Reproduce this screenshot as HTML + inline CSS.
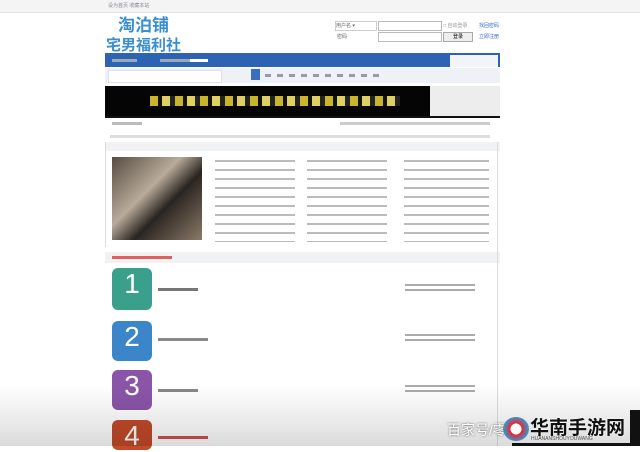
<!DOCTYPE html>
<html><head><meta charset="utf-8"><style>
body{margin:0;width:640px;height:446px;overflow:hidden;background:#fff;font-family:"Liberation Sans","Noto Sans CJK SC",sans-serif;position:relative}
.a{position:absolute}
.s{background:repeating-linear-gradient(180deg,#aaa 0 2px,#fff 2px 9px);opacity:.8}
</style></head><body>
<div class="a" style="left:0;top:0;width:640px;height:12px;background:#f4f4f4;border-bottom:1px solid #e6e6e6"></div>
<div class="a" style="left:108px;top:2px;font-size:5px;color:#889">设为首页 收藏本站</div>
<div class="a" style="left:118px;top:11px;font-size:17px;color:#3a8ed2;font-weight:bold">淘泊铺</div>
<div class="a" style="left:106px;top:34px;font-size:15px;color:#3a8ed2;font-weight:bold">宅男福利社</div>
<div class="a" style="left:335px;top:21px;width:40px;height:8px;border:1px solid #ccc;font-size:5px;color:#666">用户名 ▾</div>
<div class="a" style="left:378px;top:21px;width:62px;height:8px;border:1px solid #bbb"></div>
<div class="a" style="left:378px;top:32px;width:62px;height:8px;border:1px solid #bbb"></div>
<div class="a" style="left:337px;top:33px;font-size:5px;color:#666">密码</div>
<div class="a" style="left:443px;top:32px;width:28px;height:8px;border:1px solid #aaa;background:#eee;font-size:5px;text-align:center">登录</div>
<div class="a" style="left:443px;top:22px;font-size:5px;color:#999">□ 自动登录</div>
<div class="a" style="left:479px;top:22px;font-size:5px;color:#36c">找回密码</div>
<div class="a" style="left:479px;top:33px;font-size:5px;color:#36c">立即注册</div>
<div class="a" style="left:105px;top:53px;width:395px;height:14px;background:#2e63b3"></div>
<div class="a" style="left:450px;top:55px;width:48px;height:12px;background:#f2f4f7"></div>
<div class="a" style="left:112px;top:59px;width:25px;height:3px;background:#9ab"></div>
<div class="a" style="left:160px;top:59px;width:30px;height:3px;background:#9ab"></div>
<div class="a" style="left:190px;top:59px;width:18px;height:3px;background:#fff"></div>
<div class="a" style="left:105px;top:68px;width:395px;height:15px;background:#eef1f5"></div>
<div class="a" style="left:108px;top:70px;width:112px;height:11px;background:#fff;border:1px solid #dde"></div>
<div class="a" style="left:251px;top:69px;width:9px;height:11px;background:#3a6fc0"></div>
<div class="a" style="left:265px;top:74px;width:120px;height:3px;background:repeating-linear-gradient(90deg,#99a 0 6px,transparent 6px 12px)"></div>
<div class="a" style="left:105px;top:86px;width:325px;height:30px;background:#050505"></div>
<div class="a" style="left:150px;top:96px;width:250px;height:10px;background:repeating-linear-gradient(90deg,#c9b42a 0 8px,#111 8px 12px,#e0d060 12px 20px,#222 20px 25px)"></div>
<div class="a" style="left:430px;top:86px;width:70px;height:30px;background:#ededed"></div>
<div class="a" style="left:105px;top:116px;width:395px;height:2px;background:#111"></div>
<div class="a" style="left:112px;top:122px;width:30px;background:#bbb;height:3px"></div>
<div class="a" style="left:340px;top:122px;width:150px;background:#ccc;height:3px"></div>
<div class="a" style="left:110px;top:135px;width:380px;background:#ddd;height:3px"></div>
<div class="a" style="left:105px;top:142px;width:395px;height:9px;background:#f0f2f4"></div>
<div class="a" style="left:105px;top:142px;width:1px;height:105px;background:#ddd"></div>
<div class="a" style="left:112px;top:157px;width:90px;height:83px;background:linear-gradient(135deg,#554b40,#b8ab9a 40%,#2a2420 60%,#8a7a68)"></div>
<div class="a s" style="left:215px;top:160px;width:80px;height:82px"></div>
<div class="a s" style="left:307px;top:160px;width:80px;height:82px"></div>
<div class="a s" style="left:404px;top:160px;width:85px;height:82px"></div>
<div class="a" style="left:105px;top:252px;width:395px;height:11px;background:#f0f2f4"></div>
<div class="a" style="left:112px;top:256px;width:60px;height:3px;background:#e06060"></div>
<div class="a" style="left:497px;top:142px;width:1px;height:304px;background:#ddd"></div>
<div class="a" style="left:112px;top:268px;width:40px;height:42px;border-radius:6px;background:#3aa08c;color:#fff;font-size:28px;text-align:center">1</div>
<div class="a" style="left:112px;top:321px;width:40px;height:40px;border-radius:6px;background:#3a86c8;color:#fff;font-size:28px;text-align:center">2</div>
<div class="a" style="left:112px;top:370px;width:40px;height:40px;border-radius:6px;background:#8a55a8;color:#fff;font-size:28px;text-align:center">3</div>
<div class="a" style="left:112px;top:420px;width:40px;height:30px;border-radius:6px;background:#c24a2a;color:#fff;font-size:28px;text-align:center">4</div>
<div class="a" style="left:158px;top:288px;width:40px;height:3px;background:#777"></div>
<div class="a" style="left:158px;top:338px;width:50px;height:3px;background:#888"></div>
<div class="a" style="left:158px;top:389px;width:40px;height:3px;background:#888"></div>
<div class="a" style="left:158px;top:436px;width:50px;height:3px;background:#d05050"></div>
<div class="a" style="left:405px;top:284px;width:70px;height:8px;background:repeating-linear-gradient(180deg,#aaa 0 2px,#fff 2px 5px)"></div>
<div class="a" style="left:405px;top:334px;width:70px;height:8px;background:repeating-linear-gradient(180deg,#aaa 0 2px,#fff 2px 5px)"></div>
<div class="a" style="left:405px;top:385px;width:70px;height:8px;background:repeating-linear-gradient(180deg,#aaa 0 2px,#fff 2px 5px)"></div>
<div class="a" style="left:0;top:385px;width:640px;height:61px;background:linear-gradient(180deg,rgba(0,0,0,0),rgba(0,0,0,.14))"></div>
<div class="a" style="left:447px;top:420px;font-size:14px;color:#fff;text-shadow:0 0 2px #555">百家号/零</div>
<div class="a" style="left:512px;top:443px;width:128px;height:3px;background:#111"></div>
<div class="a" style="left:503px;top:417px;width:26px;height:24px;border-radius:50%;background:radial-gradient(circle,#fff 30%,#e23 32%,#39c 70%)"></div>
<div class="a" style="left:530px;top:413px;font-size:19px;font-weight:bold;color:#111;text-shadow:0 0 2px #fff">华南手游网</div>
<div class="a" style="left:531px;top:436px;font-size:5px;color:#555">HUANANSHOUYOUWANG</div>
<div class="a" style="left:630px;top:410px;width:10px;height:36px;background:#111"></div>
</body></html>
